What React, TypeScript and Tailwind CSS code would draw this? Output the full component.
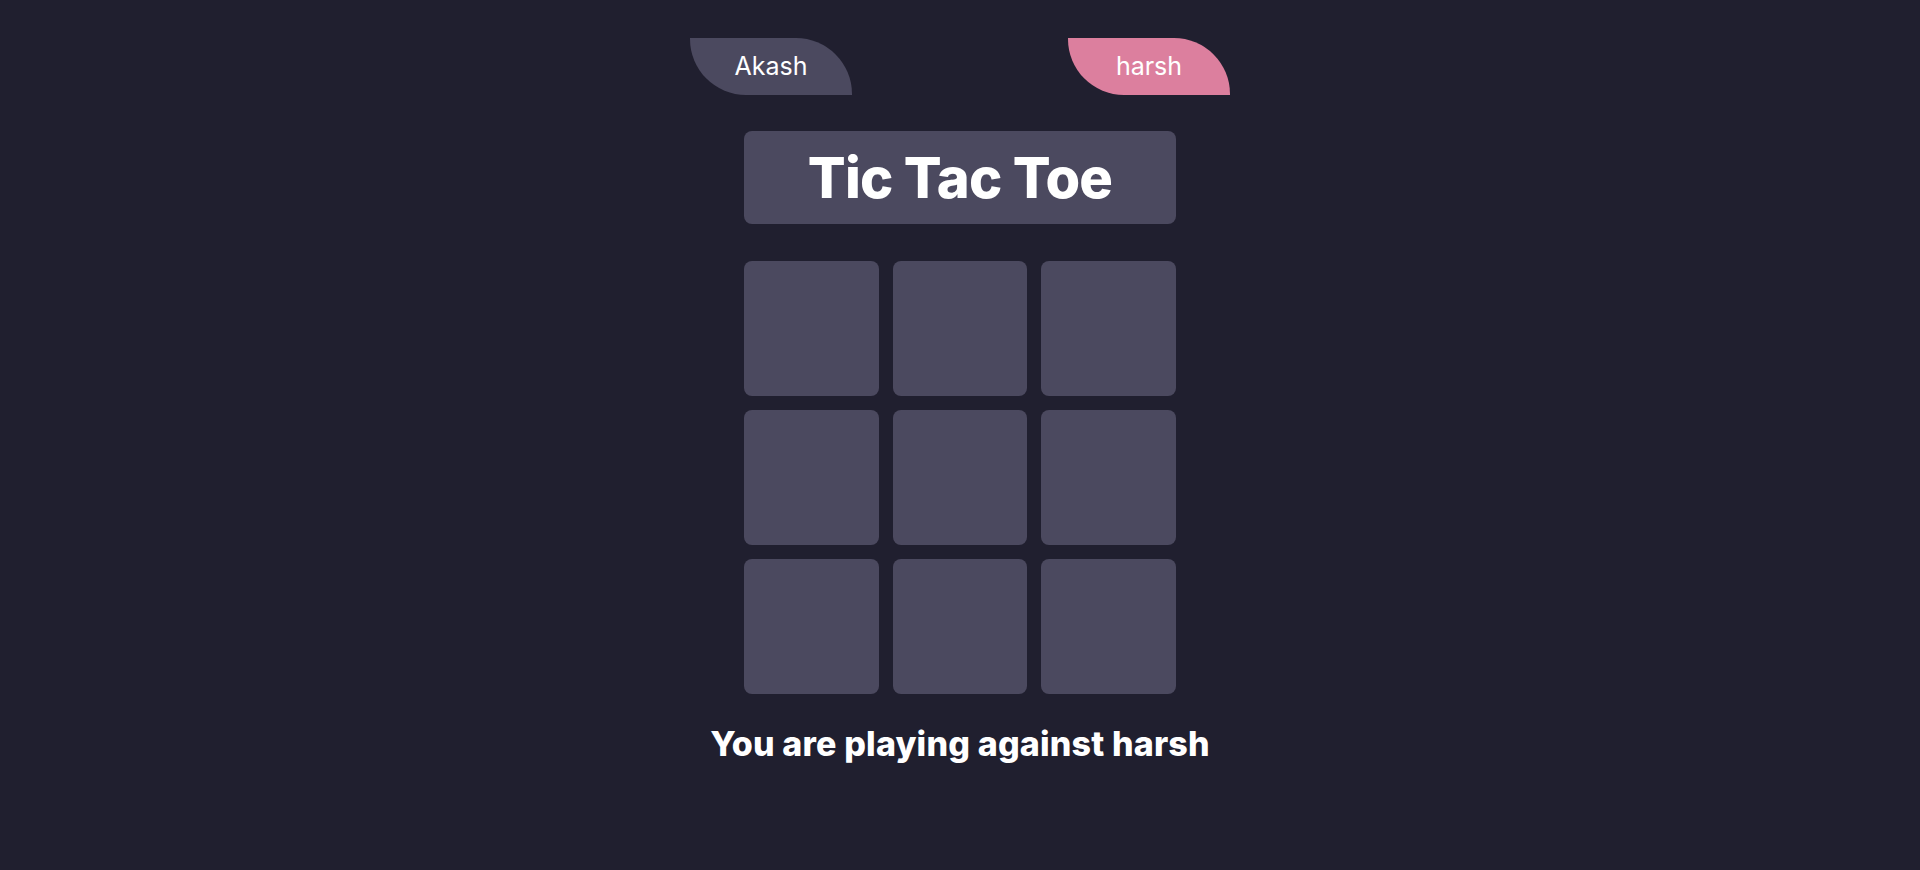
import React from "react";

const cells = Array.from({ length: 9 }, (_, i) => i);

const PlayerTab: React.FC<{ name: string; active?: boolean }> = ({ name, active }) => (
  <div
    className={`flex h-[57px] w-[162px] items-center justify-center rounded-tr-[56px] rounded-bl-[56px] text-[25px] text-white ${
      active ? "bg-[#dc7f9e]" : "bg-[#4b495f]"
    }`}
  >
    {name}
  </div>
);

export default function App() {
  return (
    <div className="flex min-h-[870px] w-full flex-col items-center bg-[#201f2f] pt-[38px] font-['Inter',sans-serif]">
      {/* players */}
      <div className="flex w-[540px] justify-between">
        <PlayerTab name="Akash" />
        <PlayerTab name="harsh" active />
      </div>

      <div className="mt-[36px] flex h-[93px] w-[432px] items-center justify-center rounded-lg bg-[#4b495f]">
        <h1 className="text-[56px] font-extrabold tracking-[-0.015em] text-white">Tic Tac Toe</h1>
      </div>

      <div className="mt-[37px] grid w-[432px] grid-cols-3 gap-[14px]">
        {cells.map((i) => (
          <button key={i} className="h-[135px] rounded-lg bg-[#4b495f]" />
        ))}
      </div>

      <p className="mt-[24px] text-[34px] font-extrabold tracking-[0.005em] text-white">You are playing against harsh</p>
    </div>
  );
}
